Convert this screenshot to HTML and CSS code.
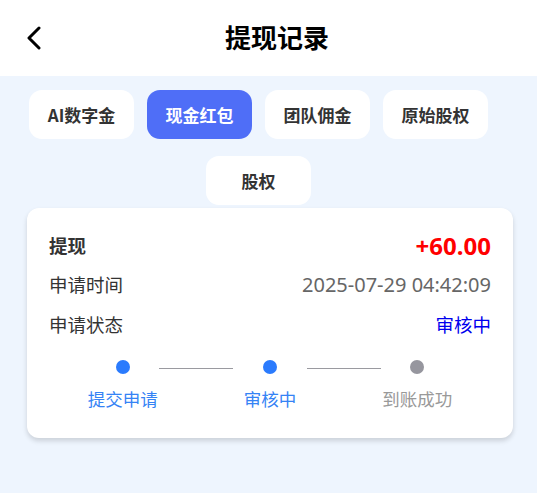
FILE: index.html
```html
<!DOCTYPE html>
<html>
  <head>
    <meta charset="utf-8">
    <title>提现记录</title>
    <link rel="stylesheet" href="styles.css">
  </head>
  <body>
    <div class="header">
      <a class="back" href="#">
        <svg width="16" height="24" viewBox="0 0 16 24">
          <path d="M13 2 L3 12 L13 22" fill="none" stroke="#000" stroke-width="3" stroke-linecap="round" stroke-linejoin="round"/>
        </svg>
      </a>
      <h1>提现记录</h1>
    </div>
    <div class="tabs">
      <a class="tab" href="#">AI数字金</a>
      <a class="tab active" href="#">现金红包</a>
      <a class="tab" href="#">团队佣金</a>
      <a class="tab" href="#">原始股权</a>
      <a class="tab" href="#">股权</a>
    </div>
    <div class="card">
      <div class="row row-title">
        <span>提现</span>
        <span class="amount">+60.00</span>
      </div>
      <div class="row">
        <span>申请时间</span>
        <span class="time">2025-07-29 04:42:09</span>
      </div>
      <div class="row">
        <span>申请状态</span>
        <span class="status">审核中</span>
      </div>
      <div class="steps">
        <div class="step done">
          <i class="dot"></i>
          <span>提交申请</span>
        </div>
        <div class="step done">
          <i class="dot"></i>
          <span>审核中</span>
        </div>
        <div class="step">
          <i class="dot"></i>
          <span>到账成功</span>
        </div>
      </div>
    </div>
  </body>
</html>
```

FILE: styles.css
```css
body, html {
  margin: 0px;
  padding: 0px;
  height: 100%;
}
body {
  background: #eef5fe;
  font-family: "Noto Sans CJK SC", "Noto Sans", sans-serif;
  color: #333;
}
.header {
  height: 76px;
  background: #fff;
  display: flex;
  align-items: center;
  justify-content: center;
  position: relative;
}
.header h1 {
  margin: 0 0 3px 17px;
  font-size: 26px;
  line-height: 36px;
  font-weight: bold;
  color: #000;
}
.back {
  position: absolute;
  left: 26px;
  top: 26px;
  display: block;
  line-height: 0;
}
.tabs {
  width: 459px;
  margin: 14px 0 0 29px;
  display: flex;
  flex-wrap: wrap;
  justify-content: center;
  column-gap: 13px;
  row-gap: 17px;
}
.tab {
  width: 105px;
  height: 49px;
  border-radius: 13px;
  background: #fff;
  display: flex;
  align-items: center;
  justify-content: center;
  font-size: 17px;
  font-weight: bold;
  color: #333;
  text-decoration: none;
}
.tab.active {
  background: #4f6ef7;
  color: #fff;
}
.card {
  margin: 3px 24px 0 27px;
  background: #fff;
  border-radius: 12px;
  box-shadow: 0 3px 5px rgba(0, 0, 0, 0.15);
  padding: 18px 22px 27px;
}
.row {
  display: flex;
  justify-content: space-between;
  align-items: center;
  height: 40px;
  font-size: 18.5px;
  color: #333;
}
.row-title {
  height: 38px;
  font-weight: bold;
}
.amount {
  color: #ff0000;
  font-size: 24px;
  font-family: "Noto Sans", sans-serif;
}
.time {
  color: #666;
  font-size: 20px;
  font-family: "Noto Sans", sans-serif;
}
.status {
  color: #0000ee;
}
.steps {
  display: flex;
  margin-top: 16px;
}
.step {
  flex: 1;
  display: flex;
  flex-direction: column;
  align-items: center;
  position: relative;
  font-size: 17.5px;
  color: #999;
}
.step .dot {
  width: 14px;
  height: 14px;
  border-radius: 50%;
  background: #96969e;
  margin-bottom: 12px;
}
.step.done {
  color: #3583f5;
}
.step.done .dot {
  background: #2b7bfd;
}
.step:not(:last-child)::after {
  content: "";
  position: absolute;
  top: 8px;
  left: calc(100% - 37px);
  width: 74px;
  height: 1px;
  background: #9a9aa0;
}
```
